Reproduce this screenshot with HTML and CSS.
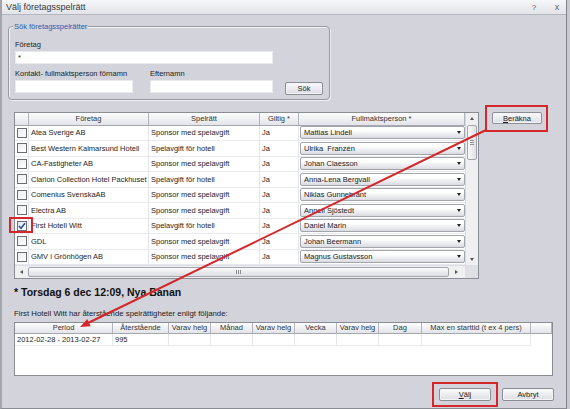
FILE: index.html
```html
<!DOCTYPE html>
<html lang="sv">
<head>
    <meta charset="UTF-8">
    <title>Välj företagsspelrätt</title>
    <link rel="stylesheet" href="styles.css">
</head>
<body>

<div class="window">
    <div class="titlebar">
        <span class="title">Välj företagsspelrätt</span>
        <span class="tb-btn help">?</span>
        <span class="tb-btn close">x</span>
    </div>

    <div class="content">
        <div class="search">
            <span class="legend">Sök företagsspelrätter</span>
            <label class="lbl">Företag</label>
            <div class="input wide">*</div>
            <div class="search-row">
                <div class="field">
                    <label class="lbl">Kontakt- fullmaktsperson förnamn</label>
                    <div class="input first"></div>
                </div>
                <div class="field">
                    <label class="lbl">Efternamn</label>
                    <div class="input last"></div>
                </div>
                <button class="btn sok">Sök</button>
            </div>
        </div>

        <div class="main-row">
            <div class="grid companies">
                <div class="grid-body">
                    <div class="cols">
                        <div class="row head">
                            <div class="hcell"></div>
                            <div class="hcell">Företag</div>
                            <div class="hcell">Spelrätt</div>
                            <div class="hcell">Giltig *</div>
                            <div class="hcell">Fullmaktsperson *</div>
                        </div>
                        <div class="row">
                            <div class="cell"><span class="check"></span></div>
                            <div class="cell">Atea Sverige AB</div>
                            <div class="cell">Sponsor med spelavgift</div>
                            <div class="cell">Ja</div>
                            <div class="cell"><div class="combo">Mattias Lindell<span class="arrow"></span></div></div>
                        </div>
                        <div class="row">
                            <div class="cell"><span class="check"></span></div>
                            <div class="cell">Best Western Kalmarsund Hotell</div>
                            <div class="cell">Spelavgift för hotell</div>
                            <div class="cell">Ja</div>
                            <div class="cell"><div class="combo">Ulrika&nbsp; Franzén<span class="arrow"></span></div></div>
                        </div>
                        <div class="row">
                            <div class="cell"><span class="check"></span></div>
                            <div class="cell">CA-Fastigheter AB</div>
                            <div class="cell">Sponsor med spelavgift</div>
                            <div class="cell">Ja</div>
                            <div class="cell"><div class="combo">Johan Claesson<span class="arrow"></span></div></div>
                        </div>
                        <div class="row">
                            <div class="cell"><span class="check"></span></div>
                            <div class="cell">Clarion Collection Hotel Packhuset</div>
                            <div class="cell">Spelavgift för hotell</div>
                            <div class="cell">Ja</div>
                            <div class="cell"><div class="combo">Anna-Lena Bergvall<span class="arrow"></span></div></div>
                        </div>
                        <div class="row">
                            <div class="cell"><span class="check"></span></div>
                            <div class="cell">Comenius SvenskaAB</div>
                            <div class="cell">Sponsor med spelavgift</div>
                            <div class="cell">Ja</div>
                            <div class="cell"><div class="combo">Niklas Gunnebrant<span class="arrow"></span></div></div>
                        </div>
                        <div class="row">
                            <div class="cell"><span class="check"></span></div>
                            <div class="cell">Electra AB</div>
                            <div class="cell">Sponsor med spelavgift</div>
                            <div class="cell">Ja</div>
                            <div class="cell"><div class="combo">Anneli Sjöstedt<span class="arrow"></span></div></div>
                        </div>
                        <div class="row">
                            <div class="cell"><span class="check checked">
                                <svg width="8" height="8" viewBox="0 0 8 8"><path d="M1 4 L3 6.2 L7 1.2" fill="none" stroke="#2b4f9e" stroke-width="1.6"/></svg>
                            </span></div>
                            <div class="cell">First Hotell Witt</div>
                            <div class="cell">Spelavgift för hotell</div>
                            <div class="cell">Ja</div>
                            <div class="cell"><div class="combo">Daniel Marin<span class="arrow"></span></div></div>
                        </div>
                        <div class="row">
                            <div class="cell"><span class="check"></span></div>
                            <div class="cell">GDL</div>
                            <div class="cell">Sponsor med spelavgift</div>
                            <div class="cell">Ja</div>
                            <div class="cell"><div class="combo">Johan Beermann<span class="arrow"></span></div></div>
                        </div>
                        <div class="row">
                            <div class="cell"><span class="check"></span></div>
                            <div class="cell">GMV i Grönhögen AB</div>
                            <div class="cell">Sponsor med spelavgift</div>
                            <div class="cell">Ja</div>
                            <div class="cell"><div class="combo">Magnus Gustavsson<span class="arrow"></span></div></div>
                        </div>
                    </div>
                    <div class="vscroll">
                        <span class="sb-arrow up"></span>
                        <span class="vthumb"><i></i><i></i><i></i></span>
                        <span class="sb-arrow down"></span>
                    </div>
                </div>
                <div class="hscroll">
                    <span class="sb-arrow left"></span>
                    <span class="hthumb"><i></i><i></i><i></i></span>
                    <span class="sb-arrow right"></span>
                    <span class="corner"></span>
                </div>
                <span class="mark mark-check"></span>
            </div>
            <div class="mark mark-btn">
                <button class="btn calc"><u>B</u>eräkna</button>
            </div>
        </div>

        <div class="date-line">* Torsdag 6 dec 12:09, Nya Banan</div>
        <div class="caption">First Hotell Witt har återstående spelrättigheter enligt följande:</div>

        <div class="grid periods">
            <div class="prow head">
                <div class="hcell">Period</div>
                <div class="hcell">Återstående</div>
                <div class="hcell">Varav helg</div>
                <div class="hcell">Månad</div>
                <div class="hcell">Varav helg</div>
                <div class="hcell">Vecka</div>
                <div class="hcell">Varav helg</div>
                <div class="hcell">Dag</div>
                <div class="hcell">Max en starttid (t ex 4 pers)</div>
                <div class="hcell"></div>
            </div>
            <div class="prow data">
                <div class="cell">2012-02-28 - 2013-02-27</div>
                <div class="cell">995</div>
                <div class="cell"></div>
                <div class="cell"></div>
                <div class="cell"></div>
                <div class="cell"></div>
                <div class="cell"></div>
                <div class="cell"></div>
                <div class="cell"></div>
                <div class="cell blank"></div>
            </div>
        </div>

        <div class="footer">
            <div class="mark mark-ok">
                <button class="btn ok"><u>V</u>älj</button>
            </div>
            <button class="btn cancel">Avbryt</button>
        </div>
    </div>

    <!-- red annotation arrow from Beräkna down to the Period column -->
    <svg class="annot" width="570" height="409" viewBox="0 0 570 409">
        <line x1="486" y1="130" x2="88" y2="323" stroke="#d4262b" stroke-width="2"/>
        <polygon points="80,327 90.7,326.2 87.3,319" fill="#d4262b"/>
    </svg>
</div>

</body>
</html>
```

FILE: styles.css
```css
* { box-sizing: border-box; }
body {
    margin: 0;
    background: #c9cad1;
    font-family: "Liberation Sans", Arial, sans-serif;
    font-size: 7.5px;
    color: #1e1e1e;
}
.window {
    position: relative;
    width: 567px;
    height: 409px;
    background: #d2d3db;
    border-left: 2px solid #a3a5ad;
    border-right: 1px solid #7f8189;
    border-bottom: 1px solid #8a8c94;
    display: flex;
    flex-direction: column;
}
.titlebar {
    height: 15px;
    flex: none;
    display: flex;
    align-items: center;
    padding: 0 0 0 4px;
    background: linear-gradient(#f5f6f8, #e2e4e9);
    border-bottom: 1px solid #b4b6be;
    font-size: 9px;
    color: #3a3a3a;
}
.title { flex: 1; }
.tb-btn {
    text-align: center;
    color: #666;
    font-size: 8px;
}
.tb-btn.help { width: 28px; }
.tb-btn.close { width: 18px; font-size: 9px; }

.content {
    padding: 0 0 0 6px;
    display: flex;
    flex-direction: column;
}

/* search group */
.search {
    width: 322px;
    margin-top: 11px;
    padding: 0 6px 6px 6px;
    border: 1px solid #989aa2;
    border-radius: 4px;
    box-shadow: inset 1px 1px 0 #f2f2f5, 1px 1px 0 #eeeef2;
}
.search .legend {
    display: block;
    width: fit-content;
    margin: -5px 0 0 -2px;
    padding: 0 1px;
    line-height: 10px;
    background: #d2d3db;
    color: #2a5db0;
}
.lbl {
    display: block;
    line-height: 10px;
    color: #222;
    white-space: nowrap;
}
.search > .lbl { margin-top: 8px; }
.input {
    height: 13px;
    margin-top: 1px;
    background: #fff;
    border: 1px solid #e9eaee;
    padding-left: 2px;
    line-height: 11px;
}
.input.wide { width: 258px; }
.input.first { width: 118px; }
.input.last { width: 123px; }
.search-row {
    display: flex;
    align-items: flex-end;
    margin-top: 5px;
}
.field + .field { margin-left: 17px; }

.btn {
    font-family: "Liberation Sans", Arial, sans-serif;
    font-size: 7.5px;
    color: #222;
    height: 13px;
    padding: 0;
    border: 1px solid #8c8e96;
    border-radius: 2px;
    background: linear-gradient(#fbfbfc, #dcdde3);
    box-shadow: inset 0 0 0 1px #f4f4f6;
}
.btn.sok {
    width: 38px;
    margin-left: 12px;
    margin-bottom: -2px;
}

/* companies grid */
.main-row {
    display: flex;
    align-items: flex-start;
    margin-top: 12px;
    margin-left: 6px;
}
.grid {
    position: relative;
    background: #fff;
    border: 1px solid #8b8d95;
}
.companies { width: 465px; flex: none; }
.grid-body { display: flex; }
.cols { width: 450px; }
.row {
    display: grid;
    grid-template-columns: 14px 120px 111px 39px 166px;
    height: 15.5px;
}
.row.head { height: 12.5px; }
.hcell {
    background: linear-gradient(#fdfdfe, #e3e4e9);
    border-right: 1px solid #b3b5bd;
    border-bottom: 1px solid #a6a8b0;
    text-align: center;
    line-height: 11px;
    color: #333;
    white-space: nowrap;
    overflow: hidden;
}
.cell {
    border-right: 1px solid #e4e5ea;
    border-bottom: 1px solid #e9eaee;
    padding-left: 2px;
    display: flex;
    align-items: center;
    white-space: nowrap;
    overflow: hidden;
}
.row .cell:first-child {
    justify-content: center;
    padding-left: 0;
}
.check {
    width: 10px;
    height: 10px;
    border: 1px solid #6b6d75;
    background: linear-gradient(135deg, #ececf0, #ffffff);
    display: flex;
    align-items: center;
    justify-content: center;
}
.check.checked { background: linear-gradient(135deg, #dfe6f5, #ffffff); }
.row .cell:last-child {
    padding: 1px 0 1px 1px;
    border-right: none;
}
.combo {
    flex: 1;
    height: 13px;
    display: flex;
    align-items: center;
    padding-left: 3px;
    border: 1px solid #a3a5ad;
    border-radius: 2px;
    background: linear-gradient(#ffffff 30%, #dadbe1);
    color: #222;
}
.arrow {
    margin-left: auto;
    margin-right: 3px;
    border-left: 2.5px solid transparent;
    border-right: 2.5px solid transparent;
    border-top: 3px solid #222;
}

/* scrollbars */
.vscroll {
    width: 13px;
    background: #f0f0f3;
    border-left: 1px solid #d8d9de;
    display: flex;
    flex-direction: column;
    align-items: center;
}
.sb-arrow {
    width: 0;
    height: 0;
    border: 2px solid transparent;
}
.sb-arrow.up { border-bottom: 3px solid #555; border-top-width: 0; margin-top: 4px; }
.sb-arrow.down { border-top: 3px solid #555; border-bottom-width: 0; margin: auto 0 4px; }
.vthumb {
    width: 10px;
    height: 35px;
    margin-top: 5px;
    border: 1px solid #a3a5ad;
    border-radius: 2px;
    background: linear-gradient(90deg, #fafafb, #dfe0e5);
    display: flex;
    flex-direction: column;
    align-items: center;
    justify-content: center;
    gap: 1px;
}
.vthumb i { width: 4px; height: 1px; background: #8e9098; }
.hscroll {
    height: 13px;
    display: flex;
    align-items: center;
    background: #f0f0f3;
    border-top: 1px solid #dcdde2;
}
.sb-arrow.left { border-right: 3px solid #555; border-left-width: 0; margin: 0 5px; }
.sb-arrow.right { border-left: 3px solid #555; border-right-width: 0; margin: 0 7px 0 6px; }
.hthumb {
    width: 422px;
    height: 10px;
    border: 1px solid #a3a5ad;
    border-radius: 2px;
    background: linear-gradient(#fafafb, #dcdde2);
    display: flex;
    align-items: center;
    justify-content: center;
    gap: 1px;
}
.hthumb i { width: 1px; height: 4px; background: #8e9098; }
.corner {
    align-self: stretch;
    width: 13px;
    margin-left: auto;
    background: #dfe0e5;
}

/* red annotations */
.mark { border: 2px solid #d4262b; }
.mark-check {
    position: absolute;
    left: -6px;
    top: 104px;
    width: 24px;
    height: 16px;
}
.mark-btn {
    margin: -7px 0 0 6px;
    padding: 5px 4px 6px 5px;
}
.btn.calc { width: 50px; height: 12px; display: block; }
.annot {
    position: absolute;
    left: -2px;
    top: 0;
    pointer-events: none;
}

/* lower part */
.date-line {
    margin: 7px 0 0 6px;
    font-size: 10.5px;
    font-weight: bold;
    line-height: 12px;
    color: #111;
}
.caption {
    margin: 11px 0 0 6px;
    font-size: 7.8px;
    line-height: 10px;
    color: #222;
}
.periods {
    width: 539px;
    height: 54px;
    margin: 3px 0 0 6px;
}
.prow {
    display: grid;
    grid-template-columns: 98px 56px 42px 42px 42px 42px 42px 43px 109px 21px;
}
.prow.head { height: 11px; }
.prow.head .hcell { line-height: 10px; }
.prow.data { height: 12px; }
.prow .cell { padding-left: 2px; }
.prow .cell.blank { border: none; }

.footer {
    display: flex;
    align-items: center;
    justify-content: flex-end;
    padding-right: 12px;
    margin-top: 6px;
}
.mark-ok { padding: 4px 5px 4px 5px; }
.btn.ok { width: 52px; display: block; }
.btn.cancel { width: 52px; margin-left: 4px; }
```
